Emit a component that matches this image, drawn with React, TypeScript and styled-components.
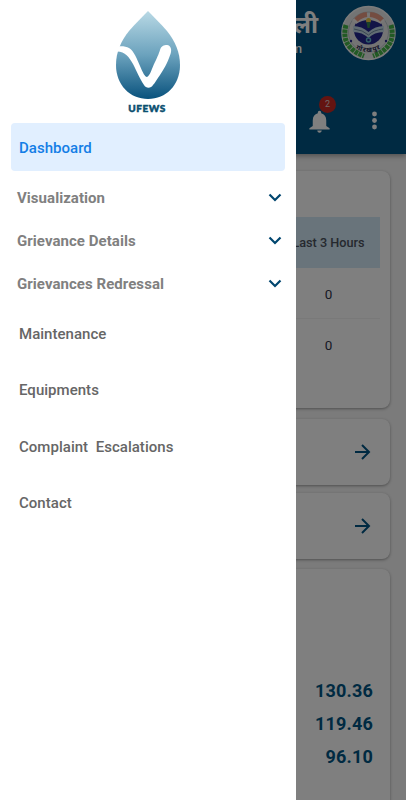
import React from 'react';
import styled, { createGlobalStyle } from 'styled-components';

const Global = createGlobalStyle`
  * { box-sizing: border-box; }
  body { margin: 0; font-family: Roboto, "Noto Sans", sans-serif; }
`;
const Screen = styled.div`
  position: relative;
  width: 406px;
  height: 800px;
  overflow: hidden;
  background: #f6f6f6;
`;
const Header = styled.header`
  height: 154px;
  background: #005584;
  color: #fff;
  box-shadow: 0 2px 5px rgba(0, 0, 0, 0.35);
`;
const Brand = styled.div`
  height: 84px;
  display: flex;
  justify-content: flex-end;
  padding: 5px 10px 0 0;
`;
const Titles = styled.div`
  width: 60px;
  margin-right: 22px;
  text-align: right;
`;
const Hindi = styled.div`
  height: 35px;
  font: 700 24px/44px "Noto Sans Devanagari", "Noto Sans", sans-serif;
`;
const English = styled.div`
  padding-right: 16px;
  font-size: 13px;
  line-height: 18px;
  font-weight: 500;
`;
const Tools = styled.div`
  height: 70px;
  display: flex;
  align-items: center;
  justify-content: flex-end;
  gap: 29px;
  padding: 4px 20px 0 0;
`;
const BellWrap = styled.div`
  position: relative;
  width: 27px;
  height: 27px;
  svg { display: block; }
`;
const Badge = styled.span`
  position: absolute;
  left: 13px;
  top: -12px;
  width: 17px;
  height: 17px;
  border-radius: 50%;
  background: #c92822;
  color: #e0d0d0;
  font-size: 9px;
  line-height: 17px;
  text-align: center;
`;
const Main = styled.main`
  padding: 17px 16px 0 10px;
`;
const Card = styled.section<{ $h: number; $gap: number }>`
  height: ${p => p.$h}px;
  margin-bottom: ${p => p.$gap}px;
  border-radius: 8px;
  background: #fff;
  box-shadow: 0 1px 3px rgba(0, 0, 0, 0.36);
`;
const Table = styled.div`
  padding: 46px 10px 0;
`;
const Cell = styled.div<{ $head?: boolean }>`
  height: 51px;
  display: flex;
  align-items: center;
  justify-content: center;
  padding: ${p => (p.$head ? '0 0 0 257px' : '1px 0 0 257px')};
  background: ${p => (p.$head ? '#d2e8f7' : 'transparent')};
  border-bottom: ${p => (p.$head ? '0' : '1px solid #f2f2f2')};
  color: ${p => (p.$head ? '#4c535e' : '#30344a')};
  font-size: ${p => (p.$head ? 12.7 : 13.5)}px;
  font-weight: ${p => (p.$head ? 500 : 400)};
  white-space: nowrap;
  &:last-child { border: 0; }
`;
const LinkCard = styled(Card)`
  display: flex;
  align-items: center;
  justify-content: flex-end;
  padding-right: 16px;
`;
const Values = styled.div`
  padding: 105px 17px 0;
  text-align: right;
  color: #005584;
  font-size: 18px;
  font-weight: 700;
  line-height: 33px;
  letter-spacing: 0.2px;
`;
const Scrim = styled.div`
  position: absolute;
  inset: 0;
  background: rgba(0, 0, 0, 0.5);
`;
const Drawer = styled.aside`
  position: absolute;
  inset: 0 auto 0 0;
  width: 296px;
  background: #fff;
`;
const Logo = styled.div`
  height: 123px;
  display: flex;
  flex-direction: column;
  align-items: center;
  padding-top: 10px;
`;
const LogoName = styled.div`
  margin: 1px 2px 0 0;
  font: 900 10px/14px Lato, sans-serif;
  letter-spacing: 0.5px;
  color: #0b4f70;
  -webkit-text-stroke: 0.5px #0b4f70;
`;
const Item = styled.a<{ $active?: boolean }>`
  height: ${p => (p.$active ? 48 : 56.3)}px;
  margin: 0 11px;
  padding: ${p => (p.$active ? 1 : 0)}px 8px 0;
  display: flex;
  align-items: center;
  border-radius: 4px;
  background: ${p => (p.$active ? '#e1efff' : 'transparent')};
  color: ${p => (p.$active ? '#147ee6' : '#666')};
  font-size: 15px;
  font-weight: 500;
  white-space: pre;
  letter-spacing: 0.03px;
`;
const Groups = styled.div`
  padding-top: 5px;
`;
const Group = styled.div`
  height: 43.3px;
  padding: 0 11px 0 17px;
  display: flex;
  align-items: center;
  justify-content: space-between;
  color: #808080;
  font-size: 15px;
  font-weight: 700;
  letter-spacing: 0.05px;
`;

const Drop = () => (
  <svg width="66" height="90" viewBox="0 0 66 90">
    <defs>
      <linearGradient id="water" x1="0" y1="0" x2="0" y2="1">
        <stop offset="0" stopColor="#b9d9e5" />
        <stop offset="0.5" stopColor="#6ba2bd" />
        <stop offset="1" stopColor="#09527d" />
      </linearGradient>
    </defs>
    <path d="M33 1C27 7 20 14 14 21C6 31 1 42 1 55c0 20 14 34 32 34s32-14 32-34C65 42 60 31 52 21C46 14 39 7 33 1Z" fill="url(#water)" />
    <path d="M1 36.5C6 36 11 36 14 38C19 41 22 49 25 56C28 63 30 67 32 67C35 66 37 58 40 52C43 46 44 43 45 40C46 36 49 35 52 35C56 35.500 57 40 55.500 44C52 54 49 59 45 65C42 69 40 73 38 75C36 78.500 31 78.500 29 75C24 67 22 62 18 54C14 47 10 41 1 41.500Z" fill="#fff" />
  </svg>
);

const Emblem = () => (
  <svg width="56" height="56" viewBox="0 0 56 56">
    <defs>
      <path id="lower" d="M13 36q15 12 30 0" />
    </defs>
    <circle cx="28.500" cy="28" r="26.500" fill="#e6e9e8" stroke="#f7f7f7" strokeWidth="1.500" />
    <path d="M6 20Q0 42 24 51M51 20Q57 42 33 51" fill="none" stroke="#45b548" strokeWidth="5" strokeDasharray="3.5 .8" />
    <circle cx="28.500" cy="27" r="20" fill="#e8e9e9" stroke="#bfc5ca" />
    <circle cx="28.500" cy="25" r="14.500" fill="#25278e" />
    <path d="M12 15Q28 2 45 15L41 19Q28 11 16 19Z" fill="#f3efec" />
    <path d="M16 15Q21 10 27 9.5M30 9.5Q37 10 42 15" fill="none" stroke="#e99a83" strokeWidth="5" />
    <path d="M13 21q9 0 15.500 6q6.500-6 15.500-6v6q-10 0-15.500 6q-6-6-15.500-6Z" fill="#c2d9e6" />
    <path d="M14 24q9 1 14.500 6q5-5 14.500-6" stroke="#718ca4" fill="none" />
    <circle cx="28.500" cy="15.500" r="2.500" fill="#eec641" /><path d="M26.500 17h4l-1 6h-2Z" fill="#348451" />
    <circle cx="28.500" cy="35" r="2" fill="none" stroke="#61bbce" strokeWidth="1.500" />
    <text dy="5" fontFamily="Noto Sans, sans-serif" fontSize="6.500" fontWeight="700" fill="#242750"><textPath href="#lower" startOffset="50%" textAnchor="middle">गोरखपुर</textPath></text>
    <circle cx="11" cy="36" r="1.2" fill="#25278e" /><circle cx="46" cy="36" r="1.2" fill="#25278e" />
  </svg>
);

const Arrow = () => (
  <svg width="24" height="24" viewBox="0 0 24 24" fill="none" stroke="#005584" strokeWidth="2">
    <path d="M5 12h14M12 5l7 7-7 7" />
  </svg>
);

export default function App() {
  return (
    <>
      <Global />
      <Screen>
        <Header>
          <Brand>
            <Titles>
              <Hindi>ली</Hindi>
              <English>m</English>
            </Titles>
            <Emblem />
          </Brand>
          <Tools>
            <BellWrap>
              <svg width="27" height="27" viewBox="0 0 24 24" fill="#fff">
                <path d="M12 22c1.1 0 2-.9 2-2h-4c0 1.1.9 2 2 2m6-6v-5c0-3.1-1.6-5.6-4.5-6.3V4a1.5 1.5 0 0 0-3 0v.7C7.6 5.4 6 7.900 6 11v5l-3 2v1h18v-1Z" />
              </svg>
              <Badge>2</Badge>
            </BellWrap>
            <svg width="24" height="28" viewBox="0 0 24 28" fill="#fff">
              <circle cx="12.5" cy="7" r="2.4" /><circle cx="12.5" cy="13.5" r="2.4" /><circle cx="12.5" cy="20" r="2.4" />
            </svg>
          </Tools>
        </Header>
        <Main>
          <Card $h={237} $gap={11}>
            <Table>
              <Cell $head>Last 3 Hours</Cell>
              <Cell>0</Cell>
              <Cell>0</Cell>
            </Table>
          </Card>
          <LinkCard $h={66} $gap={8}><Arrow /></LinkCard>
          <LinkCard $h={66} $gap={10}><Arrow /></LinkCard>
          <Card $h={240} $gap={0}>
            <Values><div>130.36</div><div>119.46</div><div>96.10</div></Values>
          </Card>
        </Main>
        <Scrim />
        <Drawer>
          <Logo><Drop /><LogoName>UFEWS</LogoName></Logo>
          <nav>
            <Item $active>Dashboard</Item>
            <Groups>
              {['Visualization', 'Grievance Details', 'Grievances Redressal'].map(name => (
                <Group key={name}>
                  {name}
                  <svg width="20" height="20" viewBox="0 0 20 20" fill="none" stroke="#00466f" strokeWidth="2.2">
                    <path d="M4.5 6.5L10 12l5.5-5.5" />
                  </svg>
                </Group>
              ))}
            </Groups>
            {['Maintenance', 'Equipments', 'Complaint  Escalations', 'Contact'].map(name => <Item key={name}>{name}</Item>)}
          </nav>
        </Drawer>
      </Screen>
    </>
  );
}
